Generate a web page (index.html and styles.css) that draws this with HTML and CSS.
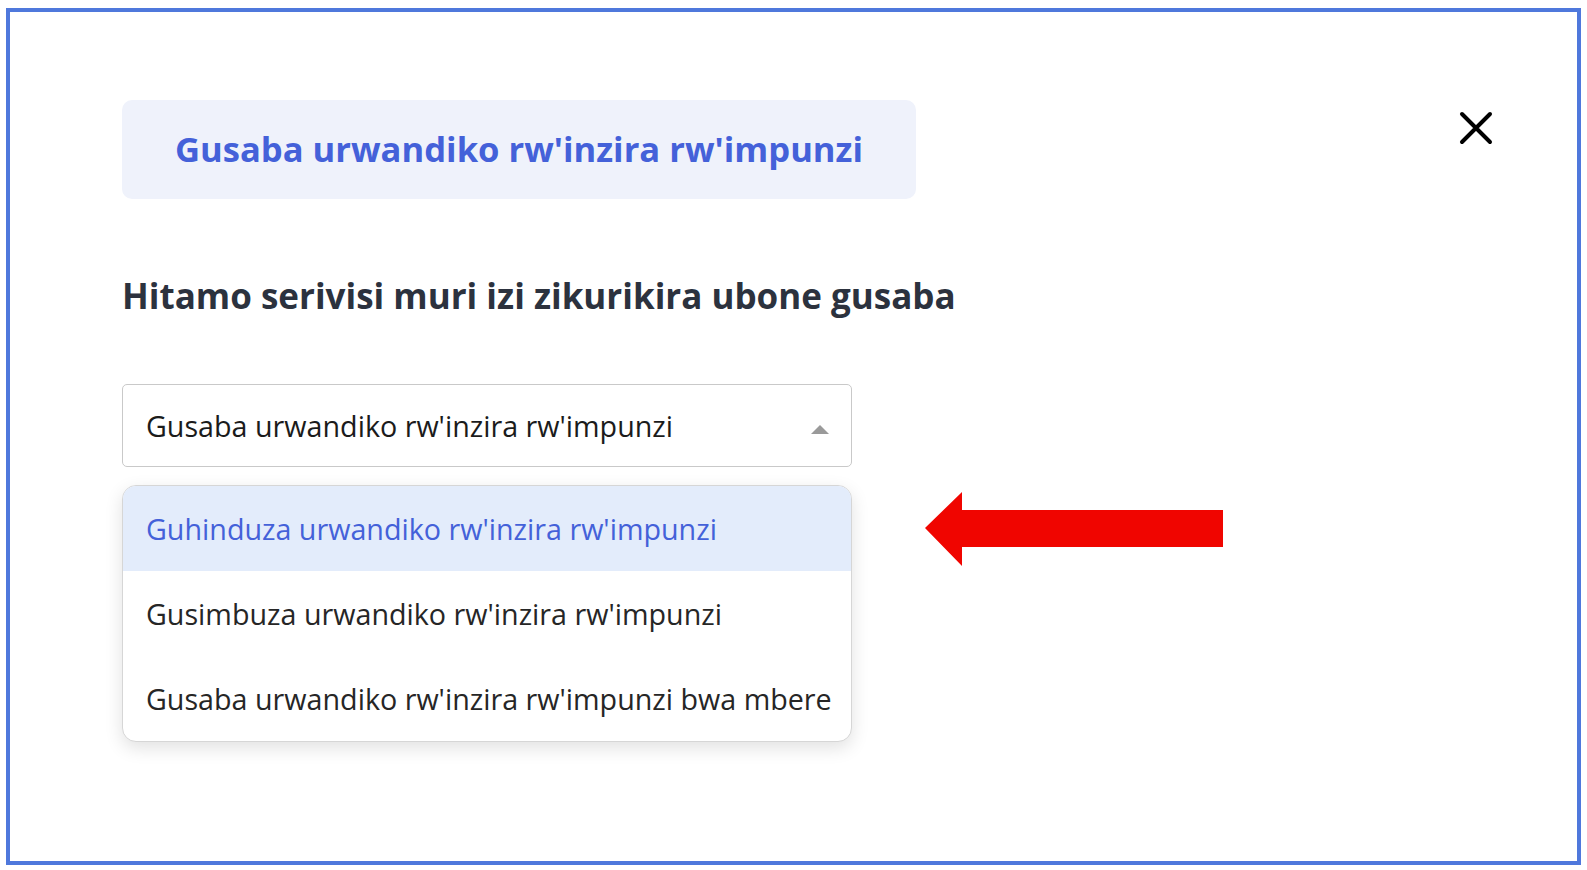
FILE: index.html
```html
<!DOCTYPE html>
<html lang="rw">
<head>
  <meta charset="UTF-8">
  <title>Gusaba urwandiko rw'inzira rw'impunzi</title>
  <link rel="stylesheet" href="styles.css">
</head>
<body>
  <div class="frame">
    <div class="modal">
      <div class="modal-head">
        <div class="title-box">Gusaba urwandiko rw'inzira rw'impunzi</div>
        <button class="close" aria-label="Funga">
          <svg width="34" height="34" viewBox="0 0 34 34">
            <path d="M3 3 L31 31 M31 3 L3 31" stroke="#000" stroke-width="4" stroke-linecap="round" fill="none"/>
          </svg>
        </button>
      </div>

      <h2 class="question">Hitamo serivisi muri izi zikurikira ubone gusaba</h2>

      <div class="select">
        <div class="select-value">
          <span>Gusaba urwandiko rw'inzira rw'impunzi</span>
          <span class="caret"></span>
        </div>
        <ul class="options">
          <li class="option active">Guhinduza urwandiko rw'inzira rw'impunzi</li>
          <li class="option">Gusimbuza urwandiko rw'inzira rw'impunzi</li>
          <li class="option">Gusaba urwandiko rw'inzira rw'impunzi bwa mbere</li>
        </ul>
      </div>

      <svg class="pointer" width="300" height="76" viewBox="0 0 300 76">
        <polygon points="0,36 37,0 37,18 298,18 298,55 37,55 37,74" fill="#f00500"/>
      </svg>
    </div>
  </div>
</body>
</html>
```

FILE: styles.css
```css
body {
  margin: 0;
  background: #fff;
  font-family: 'Open Sans', 'Lato', sans-serif;
}

.frame {
  margin: 8px 6px 5px 6px;
  height: 849px;
  border: 4px solid #4f78dc;
  background: #fff;
}

.modal {
  position: relative;
  padding: 88px 84px 0 112px;
}

.modal-head {
  display: flex;
  justify-content: space-between;
  align-items: flex-start;
}

.title-box {
  width: 794px;
  height: 99px;
  box-sizing: border-box;
  background: #eff2fb;
  border-radius: 10px;
  color: #4461d9;
  font-size: 34.6px;
  font-weight: 700;
  display: flex;
  align-items: center;
  justify-content: center;
  padding-bottom: 2px;
}

.close {
  margin-top: 11px;
  border: none;
  background: none;
  padding: 0;
  cursor: pointer;
  line-height: 0;
}

.question {
  margin: 73px 0 0;
  font-size: 35px;
  font-weight: 700;
  color: #2c323e;
  line-height: 48px;
}

.select {
  margin-top: 64px;
  width: 730px;
}

.select-value {
  height: 83px;
  box-sizing: border-box;
  border: 1px solid #c9c9c9;
  border-radius: 5px;
  display: flex;
  align-items: center;
  justify-content: space-between;
  padding: 0 22px 0 23px;
  font-size: 28.7px;
  color: #1b1b1b;
}

.caret {
  width: 0;
  height: 0;
  border-left: 9px solid transparent;
  border-right: 9px solid transparent;
  border-bottom: 9px solid #9a9a9a;
  margin-top: 8px;
}

.options {
  list-style: none;
  margin: 18px 0 0;
  padding: 0;
  border: 1px solid #d6d6d6;
  border-radius: 14px;
  overflow: hidden;
  box-shadow: 0 6px 18px rgba(0, 0, 0, 0.12);
  background: #fff;
}

.option {
  height: 85px;
  display: flex;
  align-items: center;
  padding: 0 0 0 23px;
  font-size: 28.7px;
  color: #262626;
  white-space: nowrap;
}

.option.active {
  background: #e3ecfb;
  color: #4461d9;
}

.pointer {
  position: absolute;
  left: 915px;
  top: 480px;
}
```
